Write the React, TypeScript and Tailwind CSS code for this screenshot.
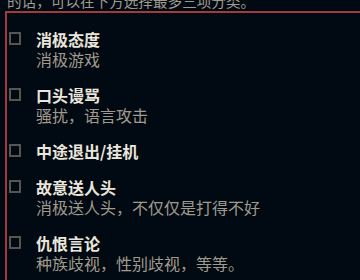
const ITEMS = [
  { title: '消极态度', desc: '消极游戏' },
  { title: '口头谩骂', desc: '骚扰，语言攻击' },
  { title: '中途退出/挂机', desc: '' },
  { title: '故意送人头', desc: '消极送人头，不仅仅是打得不好' },
  { title: '仇恨言论', desc: '种族歧视，性别歧视，等等。' },
];

export default function App() {
  return (
    <div
      className="relative w-[360px] h-[280px] overflow-hidden bg-[#010a13] pl-[5px]"
      style={{ fontFamily: '"Noto Sans CJK SC", "Noto Sans", sans-serif' }}
    >
      <p className="-mt-[9px] pl-[2px] text-[14.6px] leading-[20px] whitespace-nowrap text-[#a09b8c]">
        的话，可以在下方选择最多三项分类。
      </p>
      <div className="w-[420px] min-w-[420px] h-[320px] border-2 border-[#a23b3d] pt-[16px] pl-[2px]">
        <div className="flex flex-col gap-4">
          {ITEMS.map((it) => (
            <div key={it.title} className="flex items-start">
              <div className="mt-[3px] w-[12px] h-[13px] border-2 border-[#57554f] shrink-0" />
              <div className="ml-[15px]">
                <div className="text-[16px] leading-[20px] font-bold text-[#ebe6dc]">{it.title}</div>
                {it.desc && (
                  <div className="text-[16px] leading-[20px] text-[#a09b8c]">{it.desc}</div>
                )}
              </div>
            </div>
          ))}
        </div>
      </div>
    </div>
  );
}
